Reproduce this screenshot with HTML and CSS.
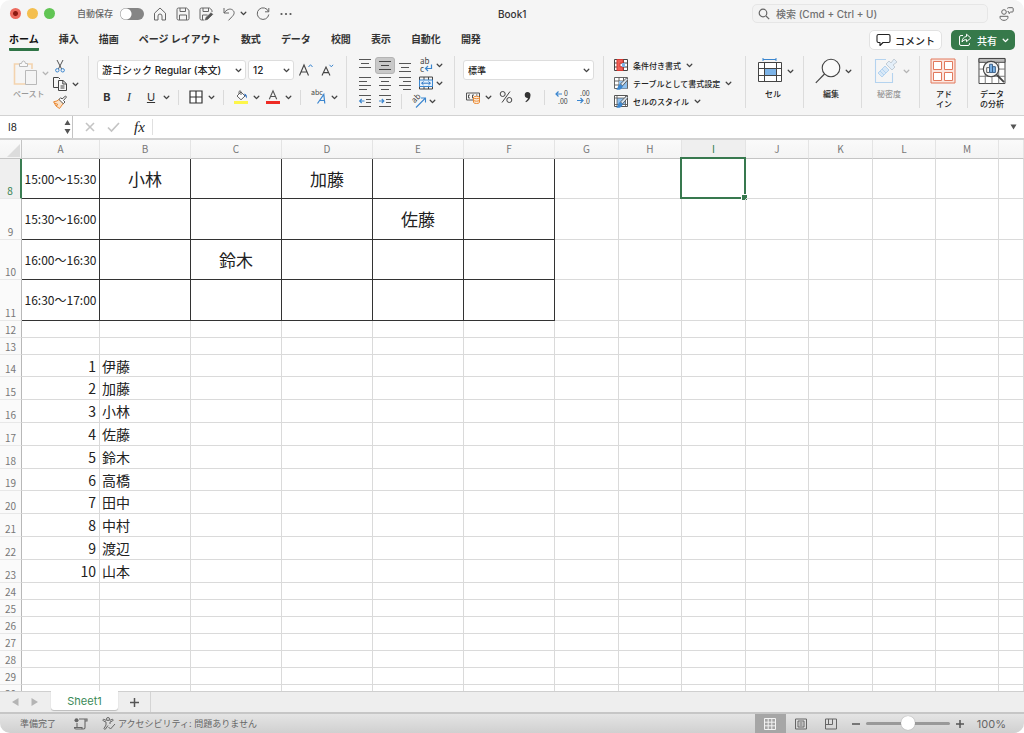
FILE: index.html
```html
<!DOCTYPE html>
<html lang="ja">
<head>
<meta charset="utf-8">
<title>Book1</title>
<link rel="stylesheet" href="styles.css">
</head>
<body>
<svg class="sprite" aria-hidden="true">
  <symbol id="chev" viewBox="0 0 7 7"><path d="M1.2 2.2 3.5 4.6 5.8 2.2" fill="none" stroke="currentColor" stroke-width="1.3" stroke-linecap="round" stroke-linejoin="round"/></symbol>
  <symbol id="brush" viewBox="0 0 14 14"><path d="M14 3.500 8.600 9.800 6.400 8 12.500 2z" fill="#dbe7f2" stroke="#444" stroke-width=".8"/><path d="M2 13.600c2-.6 1.500-4.200 4-5.600l2.800 2.200c-.6 3-3.600 4.200-6.800 3.400z" fill="#3b86cf"/></symbol>
</svg>
<div class="window">
  <header class="titlebar">
    <div class="lights"><i class="light red"></i><i class="light yellow"></i><i class="light green"></i></div>
    <label class="autosave">自動保存<input type="checkbox" class="toggle"></label>
    <div class="quick">
      <button aria-label="ホーム"><svg width="14" height="14" viewBox="0 0 14 14"><path d="M1.500 6.200 7 1l5.500 5.200v6.800H9V9a2 2 0 0 0-4 0v4H1.500z"/></svg></button>
      <button aria-label="保存"><svg width="14" height="14" viewBox="0 0 14 14"><path d="M1 2.500Q1 1 2.500 1h8L13 3.300v8.200q0 1.500-1.500 1.500h-9Q1 13 1 11.500zM4 1v3.500h5.500V1M3.500 13V8h7v5"/></svg></button>
      <button aria-label="名前を付けて保存"><svg width="14" height="14" viewBox="0 0 14 14"><path d="M5.500 13h-3Q1 13 1 11.500v-9Q1 1 2.500 1h8L13 3.300V5M4 1v3.500h5.500V1M3.500 13V8h5"/><path d="m6.500 13 .6-2.600 5-4.600 1.600 1.600-5 4.800z" fill="#555"/></svg></button>
      <button aria-label="元に戻す" class="undo"><svg width="14" height="14" viewBox="0 0 14 14"><path d="M2 1v5h5M2 6C4.500 2.500 8 1 10.600 3c2.500 2 1.600 4.600-.4 6.500L6.500 13.400"/></svg><svg class="chev"><use href="#chev"/></svg></button>
      <button aria-label="やり直し"><svg width="14" height="14" viewBox="0 0 14 14"><path d="M12.800 1v3.800H9M12.500 4.600A5.800 5.800 0 1 0 12.800 7.500"/></svg></button>
      <button aria-label="その他"><svg width="14" height="14" viewBox="0 0 14 14"><g fill="#555" stroke="none"><circle cx="2.500" cy="7" r="1.100"/><circle cx="7" cy="7" r="1.100"/><circle cx="11.500" cy="7" r="1.100"/></g></svg></button>
    </div>
    <h1 class="doc">Book1</h1>
    <label class="search"><svg width="12" height="12" viewBox="0 0 12 12"><circle cx="5" cy="5" r="3.800"/><path d="m8 8 3.200 3.200"/></svg><input type="search" placeholder="検索 (Cmd + Ctrl + U)" aria-label="検索"></label>
    <button class="people" aria-label="共同作業"><svg width="15" height="14" viewBox="0 0 15 14"><circle cx="5" cy="5" r="2.300"/><path d="M1 9.300h8v.9c0 4.200-8 4.200-8 0zM8.500 1.500q0-.8.8-.8h4q.9 0 .9.900v2.500q0 .9-.9.900h-1.600L10 6.600V5q-1.300 0-1.300-1"/></svg></button>
  </header>

  <nav class="tabs">
    <a href="#" class="active">ホーム</a><a href="#">挿入</a><a href="#">描画</a><a href="#">ページ レイアウト</a><a href="#">数式</a><a href="#">データ</a><a href="#">校閲</a><a href="#">表示</a><a href="#">自動化</a><a href="#">開発</a>
    <div class="actions">
      <button class="comment"><svg width="15" height="14" viewBox="0 0 15 14"><path d="M2.500 1.500h10q1.500 0 1.500 1.500v5q0 1.500-1.500 1.500H7L4 12.500v-3H2.500Q1 9.500 1 8V3q0-1.500 1.500-1.500z" fill="none" stroke="#222" stroke-width="1.100" stroke-linejoin="round"/></svg>コメント</button>
      <button class="share"><svg width="14" height="14" viewBox="0 0 14 14"><path d="M5 2.500H3Q1.500 2.500 1.500 4v7q0 1.500 1.500 1.500h7q1.500 0 1.500-1.500v-.8M8.500 1.200 12.800 5 8.500 8.700V6.600Q5.500 6.300 4 9q.3-4.900 4.500-5.500z" fill="none" stroke="#fff" stroke-linejoin="round"/></svg>共有<svg class="chev"><use href="#chev"/></svg></button>
    </div>
  </nav>

  <div class="ribbon">
    <section class="group clipboard">
      <button class="paste" disabled>
        <span class="pair"><svg width="25" height="26" viewBox="0 0 25 26"><path d="M6 4H1.500v20H13M15 4h4v5" fill="none" stroke="#f3d3ae" stroke-width="1.600"/><path d="M6.500 6.500v-3h2q.3-2.500 2-2.500t2 2.500h2v3z" fill="#f8f8f8" stroke="#b9b9b9"/><path d="M12.500 10.500h11v14h-11z" fill="#f4f4f4" stroke="#b9b9b9"/></svg><svg class="chev"><use href="#chev"/></svg></span>
        <span class="caption">ペースト</span>
      </button>
      <div class="stack">
        <button aria-label="切り取り"><svg width="14" height="14" viewBox="0 0 14 14" fill="none"><path d="m4 1 4.600 9M10 1 5.400 10" stroke="#555"/><circle cx="4.300" cy="11.300" r="1.700" stroke="#3b86cf"/><circle cx="9.700" cy="11.300" r="1.700" stroke="#3b86cf"/></svg></button>
        <button aria-label="コピー" class="split"><svg width="14" height="14" viewBox="0 0 14 14" fill="#f7f7f7" stroke="#444"><path d="M5 10.500H.5v-10h5L7 2"/><path d="M5.500 3.500H10l3.500 3.300v6.700h-8zM9.800 3.500V7h3.700M7.500 9h4M7.500 11h4"/></svg><svg class="chev"><use href="#chev"/></svg></button>
        <button aria-label="書式のコピー"><svg width="14" height="14" viewBox="0 0 14 14"><path d="m6.500 4 4 4-4 5.500Q2.500 12 .6 6.800 4.500 6.500 6.500 4z" fill="#fbe2c8" stroke="#ea8a35"/><path d="M1.500 8 5 9.500 3 11" fill="none" stroke="#ea8a35"/><path d="m6 4.500 1.700-1.800L9 4l3.500-3 1 1-3 3.500 1.500 1.500L10.300 8.700z" fill="#fff" stroke="#444" stroke-width=".9"/></svg></button>
      </div>
    </section>

    <section class="group font">
      <div class="row top">
        <span class="combo family"><select aria-label="フォント"><option>游ゴシック Regular (本文)</option></select><svg class="chev"><use href="#chev"/></svg></span>
        <span class="combo size"><select aria-label="サイズ"><option>12</option></select><svg class="chev"><use href="#chev"/></svg></span>
        <button class="grow" aria-label="拡大"><svg width="16" height="14" viewBox="0 0 16 14" fill="none"><path d="M1.500 12.500 6 2l4.500 10.500M3 9h6" stroke="#444" stroke-width="1.100"/><path d="m10.500 4 2-2.300 2 2.300" stroke="#3b86cf"/></svg></button>
        <button class="shrink" aria-label="縮小"><svg width="14" height="14" viewBox="0 0 14 14" fill="none"><path d="M1 12.500 5 4l4 8.500M2.500 9.600h5" stroke="#444" stroke-width="1.100"/><path d="m8.500 1.800 1.800 2 1.800-2" stroke="#3b86cf"/></svg></button>
      </div>
      <div class="row bottom">
        <button class="glyph b">B</button><button class="glyph i">I</button>
        <button class="split glyph u"><span>U</span><svg class="chev"><use href="#chev"/></svg></button>
        <i class="rule"></i>
        <button class="split" aria-label="罫線"><svg width="14" height="14" viewBox="0 0 14 14"><path d="M1 1h12v12H1zM7 1v12M1 7h12" fill="#fff" stroke="#333" stroke-width="1.200"/></svg><svg class="chev"><use href="#chev"/></svg></button>
        <i class="rule"></i>
        <span class="tight">
          <button class="split" aria-label="塗りつぶし"><svg width="14" height="14" viewBox="0 0 14 14"><path d="m3 6 4-4 4 4-4 3.800zM5 4V1.500q1-1.500 2 0V5" fill="#fff" stroke="#555" stroke-width=".9"/><path d="M10.500 3.500q3 1 2.300 5-1-2.500-2.300-3z" fill="#2f6fc0"/><path d="M0 11h14v3H0z" fill="#fdf64a"/></svg><svg class="chev"><use href="#chev"/></svg></button>
          <button class="split" aria-label="文字の色"><svg width="14" height="14" viewBox="0 0 14 14"><path d="M3.300 9.200 7 .8l3.700 8.400M4.500 6.500h5" fill="none" stroke="#555" stroke-width="1.100"/><path d="M0 11h14v3H0z" fill="#ee2b24"/></svg><svg class="chev"><use href="#chev"/></svg></button>
        </span>
        <i class="rule"></i>
        <button class="split" aria-label="ふりがな"><svg width="15" height="14" viewBox="0 0 15 14"><text x="0" y="5" class="t7">abc</text><path d="M6.500 13.500 12.800 4.500l1 9M9 10.500h4.500" fill="none" stroke="#3b86cf" stroke-width="1.200"/></svg><svg class="chev"><use href="#chev"/></svg></button>
      </div>
    </section>

    <section class="group align">
      <div class="line">
        <button class="cell" aria-label="上揃え"><svg width="12" height="14" viewBox="0 0 12 14" stroke="#555"><path d="M0 1.500h12M2 5.500h8M0 9.500h12"/></svg></button>
        <button class="cell on" aria-label="上下中央揃え"><svg width="12" height="14" viewBox="0 0 12 14" stroke="#444"><path d="M0 3.500h12M2 7.500h8M0 11.500h12"/></svg></button>
        <button class="cell" aria-label="下揃え"><svg width="12" height="14" viewBox="0 0 12 14" stroke="#555"><path d="M0 5.500h12M2 9.500h8M0 13.500h12"/></svg></button>
        <button class="split wrap" aria-label="折り返し"><svg width="14" height="14" viewBox="0 0 14 14"><text x="1" y="6" class="t8">ab</text><text x="1" y="14" class="t8">c</text><path d="M12.500 6.500v4H7M9 8l-2.500 2.500L9 13" fill="none" stroke="#3b86cf" stroke-width="1.200"/></svg><svg class="chev"><use href="#chev"/></svg></button>
      </div>
      <div class="line">
        <button class="cell" aria-label="左揃え"><svg width="12" height="14" viewBox="0 0 12 14" stroke="#555"><path d="M0 1.500h12M0 5.500h8M0 9.500h12M0 13.500h8"/></svg></button>
        <button class="cell" aria-label="中央揃え"><svg width="12" height="14" viewBox="0 0 12 14" stroke="#555"><path d="M0 1.500h12M2 5.500h8M0 9.500h12M2 13.500h8"/></svg></button>
        <button class="cell" aria-label="右揃え"><svg width="12" height="14" viewBox="0 0 12 14" stroke="#555"><path d="M0 1.500h12M4 5.500h8M0 9.500h12M4 13.500h8"/></svg></button>
        <button class="split wrap" aria-label="結合"><svg width="14" height="14" viewBox="0 0 14 14" fill="none"><path d="M.5 1h13v12H.5zM5 1v3M9.500 1v3M5 10.500V13M9.500 10.500V13" stroke="#444"/><path d="M.5 4h13v6.500H.5z" fill="#e4f0fb" stroke="#3b86cf"/><path d="M2.500 7.200h9M4.500 5.500 2.700 7.200l1.800 1.700M9.500 5.500l1.800 1.700-1.800 1.700" stroke="#2f77c5"/></svg><svg class="chev"><use href="#chev"/></svg></button>
      </div>
      <div class="line">
        <button class="cell" aria-label="インデントを減らす"><svg width="12" height="14" viewBox="0 0 12 14" fill="none" stroke="#555"><path d="M0 1.500h12M7 5.500h5M7 8.500h5M0 12.500h12"/><path d="M5.500 7H.8M2.700 5 .7 7l2 2" stroke="#3b86cf" stroke-width="1.200"/></svg></button>
        <button class="cell" aria-label="インデントを増やす"><svg width="12" height="14" viewBox="0 0 12 14" fill="none" stroke="#555"><path d="M0 1.500h12M7 5.500h5M7 8.500h5M0 12.500h12"/><path d="M0 7h4.700M2.800 5l2 2-2 2" stroke="#3b86cf" stroke-width="1.200"/></svg></button>
        <i class="rule"></i>
        <button class="split orient" aria-label="方向"><svg width="15" height="14" viewBox="0 0 15 14" fill="none"><text x="0" y="0" class="t8" transform="translate(3.500 9.500) rotate(-45)">ab</text><path d="M5 13.500 14 4.500M10 4h4.500v4.500" stroke="#3b86cf" stroke-width="1.100"/></svg><svg class="chev"><use href="#chev"/></svg></button>
      </div>
    </section>

    <section class="group number">
      <div class="row top"><span class="combo format"><select aria-label="表示形式"><option>標準</option></select><svg class="chev"><use href="#chev"/></svg></span></div>
      <div class="row bottom">
        <button class="split" aria-label="通貨"><svg width="14" height="14" viewBox="0 0 14 14" fill="none"><path d="M.5 3h13v7H.5z" stroke="#555"/><path d="M4 5H2.500v3H4M8 5H6.500v3H8M10 5h1.500" stroke="#555"/><path d="M7.500 7.500v4.700q0 1.300 3 1.300t3-1.300V7.500q0-1.200-3-1.200t-3 1.200zq0 1.200 3 1.200t3-1.200M7.500 10q0 1.200 3 1.200t3-1.200" fill="#fdeedd" stroke="#ea8a35"/></svg><svg class="chev"><use href="#chev"/></svg></button>
        <button class="percent" aria-label="パーセント"><svg width="14" height="14" viewBox="0 0 14 14" fill="none" stroke="#444"><circle cx="3.700" cy="4" r="2.500"/><circle cx="10.300" cy="10" r="2.500"/><path d="M11 1.500 3 12.500"/></svg></button>
        <button class="comma" aria-label="桁区切り"><svg width="14" height="14" viewBox="0 0 14 14"><path d="M7.500 2a3 3 0 0 1 3 3.400q-.3 4.600-4.500 6.800l-.6-.8Q7.800 9.800 8 8a3 3 0 1 1-.5-6z" fill="#333"/></svg></button>
        <i class="rule"></i>
        <button aria-label="小数点以下を増やす"><svg width="15" height="14" viewBox="0 0 15 14"><text x="9" y="6" class="t7">0</text><text x="3" y="14" class="t7">.00</text><path d="M7 4H1M3.500 1.500 1 4l2.500 2.500" fill="none" stroke="#3b86cf" stroke-width="1.200"/></svg></button>
        <button aria-label="小数点以下を減らす"><svg width="15" height="14" viewBox="0 0 15 14"><text x="3" y="6" class="t7">.00</text><text x="7" y="14" class="t7">.0</text><path d="M0 10.500h6M3.500 8 6 10.500 3.500 13" fill="none" stroke="#3b86cf" stroke-width="1.200"/></svg></button>
      </div>
    </section>

    <section class="group styles">
      <button class="line"><svg width="14" height="14" viewBox="0 0 14 14"><path d="M.5 1.500h13v11H.5zM5 1.500v11M9.500 1.500v11M.5 5h13M.5 9h13" fill="#fff" stroke="#444"/><path d="M3 1.500h6V5H6v4h3v3.500H3z" fill="#ef6058" stroke="#d93a33"/><path d="M8 5h3v4H8z" fill="#7db4e8"/></svg>条件付き書式<svg class="chev"><use href="#chev"/></svg></button>
      <button class="line"><svg width="14" height="14" viewBox="0 0 14 14"><path d="M.5 1.500h13v11H.5zM5 1.500v11M9.500 1.500v11M.5 5h13M.5 9h13" fill="#fff" stroke="#555" stroke-width=".9"/><path d="M5 5h8v7.500H5z" fill="#8fc0ee"/><use href="#brush" width="14" height="14"/></svg>テーブルとして書式設定<svg class="chev"><use href="#chev"/></svg></button>
      <button class="line"><svg width="14" height="14" viewBox="0 0 14 14"><path d="M.5 1.500h13v11H.5z" fill="#fff" stroke="#555"/><path d="M3 4h8.500v6.500H3z" fill="#8fc0ee"/><path d="M3 1.500v11M11.500 1.500v11M.5 4h13M.5 10.500h13" stroke="#555" stroke-width=".8"/><use href="#brush" width="14" height="14"/></svg>セルのスタイル<svg class="chev"><use href="#chev"/></svg></button>
    </section>

    <section class="group wide">
      <button class="big"><span class="pair"><svg width="26" height="26" viewBox="0 0 26 26" fill="none"><path d="M6 1.500h13M6 0v3M19 0v3" stroke="#3b86cf"/><path d="M1.500 4.500h23v19h-23z" fill="#fff" stroke="#444"/><path d="M7.500 10h12v7h-12z" fill="#7db4e8"/><path d="M7.500 4.500v19M19.500 4.500v19M1.500 10.500h23M1.500 17.500h23" stroke="#444"/></svg><svg class="chev"><use href="#chev"/></svg></span><span class="caption">セル</span></button>
    </section>
    <section class="group wide">
      <button class="big"><span class="pair"><svg width="26" height="26" viewBox="0 0 26 26" fill="none"><circle cx="16" cy="10" r="8.800" fill="#fafafa" stroke="#444" stroke-width="1.100"/><path d="M9.500 16 .8 24.800" stroke="#444" stroke-width="1.200"/></svg><svg class="chev"><use href="#chev"/></svg></span><span class="caption">編集</span></button>
    </section>
    <section class="group wide">
      <button class="big" disabled><span class="pair"><svg width="26" height="26" viewBox="0 0 26 26" fill="none" stroke="#b4d3ef"><path d="M13 1.500H2.500v23h17V15" stroke-width="1.100"/><path d="m5 15 7-7 4 4-7 7zM7 13l4 4M9 11l4 4" fill="#d8e8f7"/><path d="m13 6 3-3 2 2 3-4 3 3-4 3 2 2-3 3z" fill="#e4eff9" stroke="#c3cdd6"/></svg><svg class="chev"><use href="#chev"/></svg></span><span class="caption">秘密度</span></button>
    </section>
    <section class="group mid">
      <button class="big"><span class="pair"><svg width="26" height="26" viewBox="0 0 26 26" fill="#fff" stroke="#e2795c"><path d="M1 1h24v24H1z" fill="#fbe6df"/><path d="M3.500 3.500h8v8h-8zM14.500 3.500h8v8h-8zM3.500 14.500h8v8h-8zM14.500 14.500h8v8h-8z"/></svg></span><span class="caption">アド<br>イン</span></button>
    </section>
    <section class="group mid last">
      <button class="big"><span class="pair"><svg width="28" height="26" viewBox="0 0 28 27" fill="none"><path d="M.5.5h27v26H.5z" fill="#fff" stroke="#444"/><path d="M.5.5h27v4H.5z" fill="#bbb" stroke="#444"/><path d="M.5 11.500h27M.5 19h27M7 4.500v22M14 4.500v22M21 4.500v22" stroke="#777"/><circle cx="13" cy="11.500" r="8" fill="#f3f3f3" stroke="#444" stroke-width="1.200"/><path d="m19 17.500 7.500 7.500" stroke="#444" stroke-width="2"/><path d="M8.500 10h3v5h-3z" fill="#fff" stroke="#555"/><path d="M11.500 6.500h3V15h-3zM14.500 9h3v6h-3z" fill="#7db4e8" stroke="#3a5f86"/></svg></span><span class="caption">データ<br>の分析</span></button>
    </section>
  </div>

  <div class="formula">
    <div class="namebox"><input value="I8" aria-label="名前ボックス"><svg width="7" height="16" viewBox="0 0 7 16" fill="#555"><path d="M3.500 1 6.500 6h-6zM3.500 15l3-5h-6z"/></svg></div>
    <button aria-label="キャンセル"><svg width="12" height="12" viewBox="0 0 12 12"><path d="m2 2 8 8M10 2l-8 8" stroke="#c4c4c4" stroke-width="1.600"/></svg></button>
    <button aria-label="入力"><svg width="13" height="12" viewBox="0 0 13 12"><path d="m1 6.500 3.500 3.500L12 2" fill="none" stroke="#c4c4c4" stroke-width="1.700"/></svg></button>
    <button class="fx">fx</button>
    <input class="entry" aria-label="数式バー">
    <button class="expand" aria-label="展開"><svg width="7" height="6" viewBox="0 0 7 6"><path d="M.5.500h6L3.500 5.500z" fill="#555"/></svg></button>
  </div>

  <main class="sheet">
    <table>
      <colgroup><col class="c-head"><col class="c-a"><col class="c-b" span="5"><col class="c-g"><col class="c-h"><col class="c-g"><col class="c-h"><col class="c-g"><col class="c-h" span="2"><col></colgroup>
      <thead><tr><th class="corner"><svg width="13" height="13" viewBox="0 0 13 13"><path d="M13 0v13H0z" fill="#dcdcdc"/></svg><th>A<th>B<th>C<th>D<th>E<th>F<th>G<th>H<th class="cur">I<th>J<th>K<th>L<th>M<th></tr></thead>
      <tbody>
      <tr class="slot even"><th class="cur">8<td class="time">15:00〜15:30<td>小林<td><td>加藤<td><td><td><td><td><div class="selection"></div><td><td><td><td><td></tr>
      <tr class="slot"><th>9<td class="time">15:30〜16:00<td><td><td><td>佐藤<td><td><td><td><td><td><td><td><td></tr>
      <tr class="slot even"><th>10<td class="time">16:00〜16:30<td><td>鈴木<td><td><td><td><td><td><td><td><td><td><td></tr>
      <tr class="slot"><th>11<td class="time">16:30〜17:00<td><td><td><td><td><td><td><td><td><td><td><td><td></tr>
      <tr><th>12<td><td><td><td><td><td><td><td><td><td><td><td><td><td></tr>
      <tr><th>13<td><td><td><td><td><td><td><td><td><td><td><td><td><td></tr>
      <tr class="name even"><th>14<td>1<td>伊藤<td><td><td><td><td><td><td><td><td><td><td><td></tr>
      <tr class="name"><th>15<td>2<td>加藤<td><td><td><td><td><td><td><td><td><td><td><td></tr>
      <tr class="name"><th>16<td>3<td>小林<td><td><td><td><td><td><td><td><td><td><td><td></tr>
      <tr class="name"><th>17<td>4<td>佐藤<td><td><td><td><td><td><td><td><td><td><td><td></tr>
      <tr class="name"><th>18<td>5<td>鈴木<td><td><td><td><td><td><td><td><td><td><td><td></tr>
      <tr class="name even"><th>19<td>6<td>高橋<td><td><td><td><td><td><td><td><td><td><td><td></tr>
      <tr class="name"><th>20<td>7<td>田中<td><td><td><td><td><td><td><td><td><td><td><td></tr>
      <tr class="name"><th>21<td>8<td>中村<td><td><td><td><td><td><td><td><td><td><td><td></tr>
      <tr class="name"><th>22<td>9<td>渡辺<td><td><td><td><td><td><td><td><td><td><td><td></tr>
      <tr class="name"><th>23<td>10<td>山本<td><td><td><td><td><td><td><td><td><td><td><td></tr>
      <tr><th>24<td><td><td><td><td><td><td><td><td><td><td><td><td><td></tr>
      <tr><th>25<td><td><td><td><td><td><td><td><td><td><td><td><td><td></tr>
      <tr><th>26<td><td><td><td><td><td><td><td><td><td><td><td><td><td></tr>
      <tr><th>27<td><td><td><td><td><td><td><td><td><td><td><td><td><td></tr>
      <tr><th>28<td><td><td><td><td><td><td><td><td><td><td><td><td><td></tr>
      <tr><th>29<td><td><td><td><td><td><td><td><td><td><td><td><td><td></tr>
      <tr><th>30<td><td><td><td><td><td><td><td><td><td><td><td><td><td></tr>
      </tbody>
    </table>
  </main>

  <div class="sheetbar">
    <button class="arrow" aria-label="前へ"><svg width="7" height="8" viewBox="0 0 7 8"><path d="M6.500 0v8L0 4z" fill="#b4b4b4"/></svg></button>
    <button class="arrow" aria-label="次へ"><svg width="7" height="8" viewBox="0 0 7 8"><path d="M.5 0v8L7 4z" fill="#b4b4b4"/></svg></button>
    <button class="tab">Sheet1</button>
    <button class="add" aria-label="シートの追加"><svg width="9" height="9" viewBox="0 0 9 9"><path d="M4.500 0v9M0 4.500h9" stroke="#555" stroke-width="1.500"/></svg></button>
  </div>

  <footer class="status">
    <span>準備完了</span>
    <button class="macro" aria-label="マクロの記録"><svg width="14" height="12" viewBox="0 0 14 12" fill="none" stroke="#666"><circle cx="2.500" cy="2.200" r="2" fill="#666" stroke="none"/><path d="M5 1h8v2h-2v6.500q0 1.500-1.500 1.500H2q-1.500 0-1.500-1.500H8V11M3 5v4.500M11 1v3" stroke-width="1.100"/></svg></button>
    <button class="a11y"><svg width="14" height="13" viewBox="0 0 14 13" fill="none" stroke="#666"><circle cx="6" cy="2" r="1.500"/><path d="M4.500 3.500 1.500 2.200Q0 3 1.500 4L4 5v3L2 11.500q.5 1.500 1.500.5L6 8.500M7.500 3.500l3-1.300q1.500.8 0 1.800L8 5v2M6.500 10 8.500 12l4.500-5"/></svg>アクセシビリティ: 問題ありません</button>
    <div class="views">
      <button class="view on" aria-label="標準"><svg width="12" height="12" viewBox="0 0 12 12" stroke="#f4f4f4" fill="none"><path d="M.5.500h11v11H.5zM4.200.5v11M7.800.5v11M.5 4.200h11M.5 7.800h11"/></svg></button>
      <button class="view" aria-label="ページ レイアウト"><svg width="12" height="12" viewBox="0 0 12 12" stroke="#666" fill="none"><path d="M.5 1h11v10H.5zM3 3h6v6H3zM4.500 5h3M4.500 7h3"/></svg></button>
      <button class="view" aria-label="改ページ"><svg width="12" height="12" viewBox="0 0 12 12" stroke="#666" fill="none"><path d="M.5 1h11v10H.5zM3.500 1v5.500M7.500 1v5.500M.5 6.500h7"/></svg></button>
    </div>
    <button class="zoomstep" aria-label="縮小"><svg width="8" height="8" viewBox="0 0 8 8"><path d="M0 4h8" stroke="#555" stroke-width="1.500"/></svg></button>
    <input class="zoom" type="range" min="0" max="100" value="50" aria-label="ズーム">
    <button class="zoomstep" aria-label="拡大"><svg width="8" height="8" viewBox="0 0 8 8"><path d="M0 4h8M4 0v8" stroke="#555" stroke-width="1.500"/></svg></button>
    <output class="percentage">100%</output>
  </footer>
</div>
</body>
</html>
```

FILE: styles.css
```css
* { box-sizing: border-box; }

body {
  margin: 0;
  background: #fff;
  color: #222;
  font-family: Inter, "Noto Sans CJK JP", sans-serif;
  font-size: 10px;
}

button, input, select {
  margin: 0;
  padding: 0;
  border: 0;
  background: none;
  color: inherit;
  font: inherit;
}

button { display: inline-flex; align-items: center; }
svg { display: block; flex: none; overflow: visible; }
.sprite { position: absolute; width: 0; height: 0; }
.chev { width: 7px; height: 7px; color: #444; }
button:disabled .chev { color: #b4b4b4; }
.share .chev { color: #fff; }

.window {
  display: flex;
  flex-direction: column;
  height: 100vh;
  border-radius: 10px;
  overflow: hidden;
  background: #f5f5f5;
}

/* title bar */
.titlebar {
  display: grid;
  grid-template-columns: auto auto auto 1fr minmax(120px, 236px) auto;
  align-items: center;
  flex: none;
  height: 27px;
  padding: 0 10px;
}
.lights { display: flex; gap: 6px; }
.light { width: 11px; height: 11px; border-radius: 50%; }
.red { background: radial-gradient(circle, #8c1a12 0 2px, #ec6a5e 3px); }
.yellow { background: #f4bf4f; }
.green { background: #61c554; }
.autosave {
  display: flex;
  align-items: center;
  gap: 7px;
  margin-left: 22px;
  color: #666;
  font-size: 9px;
  font-weight: 500;
}
.toggle {
  appearance: none;
  width: 24px;
  height: 12px;
  border-radius: 6px;
  background: radial-gradient(circle at 6px 6px, #fff 5px, transparent 6px), #858585;
}
.quick { display: flex; gap: 9px; margin-left: 9px; }
.quick svg:not(.chev) { fill: none; stroke: #666; }
.undo { gap: 4px; }
.doc { margin: 0; padding-left: 205px; color: #333; font-size: 10px; font-weight: 500; }
.search {
  display: flex;
  align-items: center;
  gap: 6px;
  height: 19px;
  padding: 0 5px;
  border: 1px solid #e6e6e6;
  border-radius: 5px;
  background: #f3f3f3;
}
.search svg { fill: none; stroke: #666; stroke-width: 1.2; }
.search input { flex: 1; min-width: 0; font-weight: 500; }
.search input::placeholder { color: #707070; }
.people { margin-left: 11px; }
.people svg { fill: none; stroke: #666; }

/* ribbon tabs */
.tabs {
  display: flex;
  flex: none;
  gap: 20px;
  height: 26px;
  padding: 0 9px 0 9px;
  font-weight: 700;
}
.tabs a {
  height: 24px;
  border-bottom: 3px solid transparent;
  color: #333;
  line-height: 24px;
  text-decoration: none;
  white-space: nowrap;
}
.tabs .active { border-color: #2f7446; color: #111; border-radius: 1px; }
.actions { display: flex; gap: 9px; margin: 3px 0 3px auto; font-weight: 500; }
.actions button { height: 20px; border-radius: 5px; }
.comment { gap: 4px; padding: 0 6px; border: 1px solid #e2e2e2; background: #fff; }
.share { gap: 5px; padding: 0 6px 0 7px; background: #36794a; color: #fff; }

/* ribbon */
.ribbon {
  display: flex;
  flex: none;
  height: 62px;
  padding: 3px 0 7px;
  font-size: 8px;
  font-weight: 500;
  white-space: nowrap;
}
.group { flex: none; border-right: 1px solid #dcdcdc; }
.row { display: flex; align-items: center; }
.rule { width: 1px; height: 15px; background: #dadada; }
.split { gap: 5px; }
.caption { line-height: 10px; text-align: center; }

.clipboard { display: flex; gap: 4px; padding: 0 9px 0 13px; }
.paste { flex-direction: column; align-items: flex-start; gap: 3px; padding-top: 4px; }
.paste:disabled, .big:disabled { color: #999; }
.pair { display: flex; align-items: center; gap: 4px; }
.stack { display: flex; flex-direction: column; gap: 4px; padding-top: 3px; }

.font, .number { padding: 4px 8px 0; }
.bottom { gap: 8px; height: 26px; margin-top: 4px; padding-left: 3px; }
.bottom .rule { margin-right: 2px; }
.combo {
  position: relative;
  display: block;
  height: 20px;
  border: 1px solid #ddd;
  border-radius: 3px;
  background: #fff;
}
.combo select {
  appearance: none;
  width: 100%;
  height: 100%;
  padding: 0 14px 0 4px;
  font-size: 10px;
}
.combo .chev { position: absolute; right: 3px; top: 6px; pointer-events: none; }
.family { width: 149px; }
.size { width: 46px; margin-left: 2px; }
.format { width: 131px; }
.format select { font-size: 9px; }
.grow { margin-left: 4px; }
.shrink { margin-left: 7px; }
.glyph { justify-content: center; min-width: 14px; color: #333; font-size: 11px; }
.b { font-weight: 700; }
.i { font-family: "Liberation Serif", serif; font-size: 12px; font-style: italic; }
.u span { width: 14px; text-align: center; text-decoration: underline; font-weight: 400; }
.tight { display: flex; gap: 6px; }

.t7, .t8 { fill: #444; font-family: "Noto Sans CJK JP", sans-serif; font-weight: 400; }
.t7 { font-size: 7px; }
.t8 { font-size: 8px; }

.line { display: flex; align-items: center; height: 18px; }
.align { padding: 0 11px 0 8px; }
.cell { justify-content: center; width: 20px; height: 17px; }
.cell.on { border: 1px solid #b4b4b4; border-radius: 3px; background: #c8c8c8; }
.wrap { gap: 3px; margin-left: 4px; }
.align .rule { margin: 0 9px 0 6px; }
.orient { gap: 3px; }

.number { padding-right: 9px; }
.number .bottom { gap: 7px; }
.number .rule { margin: 0 3px; }

.styles { width: 142px; padding-left: 10px; }
.styles .line { gap: 5px; }

.wide { width: 58px; padding-left: 11px; }
.mid { width: 48px; padding-left: 10px; }
.last { width: auto; border: 0; }
.big { flex-direction: column; align-items: flex-start; gap: 5px; padding-top: 2px; }
.big .caption { min-width: 28px; }
.wide .caption { padding-left: 4px; }

/* formula bar */
.formula {
  display: flex;
  align-items: center;
  flex: none;
  height: 25px;
  border-top: 1px solid #d2d2d2;
  border-bottom: 2px solid #d2d2d2;
  background: #fff;
}
.namebox {
  display: flex;
  align-items: center;
  width: 73px;
  height: 22px;
  padding: 0 1px 0 8px;
  border-right: 1px solid #c4c4c4;
}
.namebox input { flex: 1; min-width: 0; }
.formula button { margin-left: 11px; }
.formula .fx {
  height: 16px;
  padding-right: 7px;
  border-right: 1px solid #e0e0e0;
  margin-left: 14px;
  font: italic 15px "Liberation Serif", serif;
}
.entry { flex: 1; min-width: 0; height: 100%; }
.formula .expand { margin-right: 7px; }

/* grid */
.sheet { flex: 1; min-height: 0; overflow: hidden; background: #fff; }
table {
  width: 100%;
  table-layout: fixed;
  border-spacing: 0;
  color: #222;
  font-family: "Noto Sans CJK JP", sans-serif;
}
.c-head { width: 22px; }
.c-a { width: 77px; }
.c-b { width: 91px; }
.c-g { width: 64px; }
.c-h { width: 63px; }
.c-a { width: 78px; }
th, td {
  height: 17px;
  padding: 0;
  border: solid #dadada;
  border-width: 0 1px 1px 0;
  line-height: 14px;
  white-space: nowrap;
}
th { color: #777; font-size: 10px; font-weight: 400; }
thead th { height: 19px; background: linear-gradient(#fafafa, #f4f4f4); border-right-color: #e4e4e4; border-bottom-color: #c4c4c4; }
thead .corner { border-right-color: #c4c4c4; }
.corner svg { margin: 2px 1px 0 auto; }
tbody th { background: #fafafa; border-right-color: #b8b8b8; border-bottom-color: #e8e8e8; vertical-align: bottom; }
.cur { background: #efefef; color: #2f7d4b; }
tbody .cur { border-right: 2px solid #3a7d52; }
.slot th, .slot td { height: 41px; }
.slot.even th, .slot.even td { height: 40px; }
.slot td { position: relative; font-size: 17px; line-height: 24px; text-align: center; }
.slot td:nth-child(-n+7) { border-color: #333; }
.slot .time { font-size: 12px; }
.name th, .name td { height: 23px; }
.name.even th, .name.even td { height: 22px; }
.name td { font-size: 14px; line-height: 20px; }
.name td:nth-child(2) { padding-right: 3px; text-align: right; }
.name td:nth-child(3) { padding-left: 2px; }
.selection {
  position: absolute;
  inset: -2px -1px -1px -2px;
  border: 2px solid #38794f;
}
.selection::after {
  content: "";
  position: absolute;
  right: -3px;
  bottom: -3px;
  width: 5px;
  height: 5px;
  border: solid #fff;
  border-width: 1px 0 0 1px;
  background: #38794f;
  background-clip: padding-box;
}

/* sheet tabs */
.sheetbar {
  display: flex;
  flex: none;
  height: 21px;
  border-top: 1px solid #cfcfcf;
  background: #eee;
}
.arrow { margin-left: 12px; }
.tab {
  justify-content: center;
  width: 67px;
  height: 19px;
  margin: -1px 0 0 13px;
  border-radius: 0 0 3px 3px;
  background: #fff;
  box-shadow: 0 1px 1px #bbb;
  color: #3a8a57;
  font-size: 11px;
}
.add { justify-content: center; width: 33px; border-right: 1px solid #d4d4d4; }

/* status bar */
.status {
  display: flex;
  align-items: center;
  flex: none;
  height: 21px;
  padding: 0 18px 0 20px;
  border-top: 2px solid #c6c6c6;
  background: linear-gradient(#e4e4e4, #d0d0d0);
  color: #666;
  font-size: 9px;
}
.macro { margin-left: 18px; }
.a11y { gap: 2px; margin-left: 14px; }
.views { display: flex; height: 100%; margin-left: auto; }
.view { justify-content: center; width: 30px; }
.view.on { width: 31px; background: #a6a6a6; }
.zoomstep { margin: 0 6px; }
.zoom {
  appearance: none;
  width: 84px;
  height: 14px;
}
.zoom::-webkit-slider-runnable-track { height: 3px; border-radius: 2px; background: #999; }
.zoom::-webkit-slider-thumb {
  appearance: none;
  width: 14px;
  height: 14px;
  margin-top: -6px;
  border-radius: 50%;
  background: #fff;
  box-shadow: 0 0 1px #888;
}
.percentage { margin-left: 7px; font-size: 11px; }
```
